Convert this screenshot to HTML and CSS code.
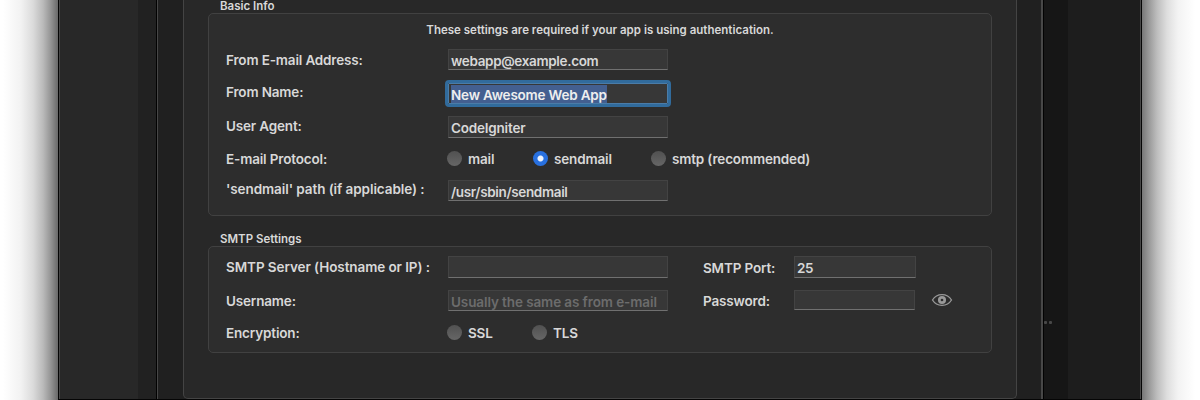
FILE: index.html
```html
<!DOCTYPE html>
<html lang="en">
<head>
<meta charset="utf-8">
<title>E-mail Settings</title>
<link rel="stylesheet" href="styles.css">
</head>
<body>
<div class="desktop">
  <div class="shadow shadow-left"></div>
  <div class="window">
    <div class="sidebar"></div>
    <div class="sidebar-shade"></div>
    <div class="sheet">
      <div class="panel">
        <h2 class="caption">Basic Info</h2>
        <section class="group basic">
          <p class="notice">These settings are required if your app is using authentication.</p>
          <div class="row r1"><span class="label">From E-mail Address:</span><div class="field"><span>webapp@example.com</span></div></div>
          <div class="row r2"><span class="label">From Name:</span><div class="field focused"><span class="selected">New Awesome Web App</span></div></div>
          <div class="row r3"><span class="label">User Agent:</span><div class="field tall"><span>CodeIgniter</span></div></div>
          <div class="row r4"><span class="label">E-mail Protocol:</span>
            <div class="radios"><span class="option first"><i class="dot"></i>mail</span><span class="option second"><i class="dot on"></i>sendmail</span><span class="option"><i class="dot"></i>smtp (recommended)</span></div>
          </div>
          <div class="row r5"><span class="label long">'sendmail' path (if applicable) :</span><div class="field"><span>/usr/sbin/sendmail</span></div></div>
        </section>
        <h2 class="caption smtp-caption">SMTP Settings</h2>
        <section class="group smtp">
          <div class="row s1"><span class="label long">SMTP Server (Hostname or IP) :</span><div class="field"></div><span class="label side">SMTP Port:</span><div class="field port"><span>25</span></div></div>
          <div class="row s2"><span class="label">Username:</span><div class="field"><span class="placeholder">Usually the same as from e-mail</span></div><span class="label side">Password:</span><div class="field password"></div>
            <svg class="eye" viewBox="0 0 22 14" width="22" height="14"><path d="M1.500 7C5.800 -.1 16.200 -.1 20.500 7C16.200 14.100 5.800 14.100 1.500 7Z"/><circle cx="11" cy="7" r="2.700"/></svg>
          </div>
          <div class="row s3"><span class="label">Encryption:</span>
            <div class="radios"><span class="option first"><i class="dot"></i>SSL</span><span class="option"><i class="dot"></i>TLS</span></div>
          </div>
        </section>
      </div>
    </div>
    <div class="right-shade"><span class="more"><i></i><i></i></span></div>
    <div class="right-pane"></div>
  </div>
  <div class="shadow shadow-right"></div>
</div>
</body>
</html>
```
FILE: styles.css
```css
* { box-sizing: border-box; }
body {
  margin: 0;
  background: #fff;
  color: #d8d8d8;
  font: 560 13.5px/16px Inter, "Liberation Sans", sans-serif;
  letter-spacing: -.16px;
}
.desktop { display: flex; width: 1200px; height: 400px; overflow: hidden; }
.shadow { width: 58px; flex: none; }
.shadow-left { background: linear-gradient(to left, #696969 0, #939393 7px, #bababa 15px, #dbdbdb 25px, #f2f2f2 37px, #fff 55px); }
.shadow-right { background: linear-gradient(to right, #777 0, #999 7px, #bdbdbd 15px, #dedede 25px, #f3f3f3 36px, #fff 53px); }
.window {
  display: flex;
  width: 1084px;
  flex: none;
  border: solid #050505;
  border-width: 0 1px 1px;
}
.sidebar { width: 79px; background: #282828; border-left: 1px solid #484848; }
.sidebar-shade { width: 19px; background: #212121; border-right: 1px solid #020202; }
.sheet {
  width: 886px;
  padding: 0 24px;
  background: #202020;
  border: solid #474747;
  border-width: 0 2px 0 1px;
  padding-left: 25px;
}
.panel {
  height: 399px;
  padding: 0 24px;
  background: #282828;
  border: 1px solid #444;
  border-top: 0;
  border-radius: 0 0 5px 5px;
}
.right-shade { width: 25px; background: #161616; border-left: 1px solid #020202; padding-top: 321px; }
.more { display: flex; gap: 2px; }
.more i { width: 3px; height: 3px; border-radius: 1px; background: #484848; }
.right-pane { flex: 1; background: #1d1d1d; border-right: 1px solid #484848; }
.caption {
  height: 13px;
  margin: 0;
  padding-left: 12px;
  font-size: 11.5px;
  font-weight: 560;
  line-height: 12px;
  letter-spacing: 0;
  white-space: nowrap;
}
.smtp-caption { height: 14px; margin-top: 17px; }
.group { background: #2d2d2d; border: 1px solid #414141; border-radius: 5px; padding: 0 17px; }
.basic { height: 203px; }
.smtp { height: 107px; margin-top: -1px; }
.notice { margin: 0; height: 35px; padding-top: 8px; font-size: 11.5px; letter-spacing: .01px; text-align: center; }
.row { display: flex; height: 21px; white-space: nowrap; }
.label { width: 222px; flex: none; padding-top: 3px; }
.label.long { letter-spacing: -.08px; }
.r2 { margin-top: 13px; }
.r2 .label { padding-top: 1px; }
.r3 { margin-top: 12px; height: 22px; }
.r3 .label { padding-top: 2px; }
.r4 { margin-top: 13px; height: 16px; }
.r4 .label, .s3 .label { padding-top: 0; }
.r5 { margin-top: 13px; height: 21px; }
.r5 .label { padding-top: 1px; }
.field {
  width: 220px;
  height: 21px;
  flex: none;
  padding: 4px 0 0 2px;
  background: #373737;
  border: 1px solid #434343;
  border-bottom-color: #707070;
  line-height: 16px;
  letter-spacing: -.34px;
}
.field span { display: block; width: max-content; margin-top: -1px; }
.field.tall { height: 22px; letter-spacing: -.2px; }
.focused { outline: 3px solid #316b9c; border-color: #4a7ca8; padding-top: 1px; color: #eee; border-radius: 1px; }
.field .selected { margin-top: 0; padding: 2px 0 0; height: 18px; background: #435f90; letter-spacing: -.2px; }
.radios { display: flex; }
.option { display: flex; margin-right: 40px; }
.option.first { width: 86px; margin-right: 0; }
.option.second { width: 78px; }
.dot { width: 15px; height: 15px; margin: 0 6px 0 -1px; border-radius: 50%; background: linear-gradient(#515151, #666); }
.dot.on { background: radial-gradient(circle, #edf3fc 0 2.500px, #2870df 3.500px); }
.s1 { margin-top: 9px; height: 22px; }
.s1 .label { padding-top: 3px; }
.s1 .field { height: 22px; }
.s2 { margin-top: 12px; height: 21px; }
.s3 { margin-top: 14px; height: 16px; }
.s3 .option.first { width: 85px; }
.label.side { width: 91px; margin-left: 35px; }
.s1 .side { padding-top: 4px; }
.port { width: 122px; }
.password { width: 121px; height: 20px; }
.field .placeholder { color: #6c6c6c; letter-spacing: -.1px; }
.eye { margin: 3px 0 0 16px; fill: none; stroke: #999; stroke-width: 1.300; }
.eye circle { stroke-width: 2.700; }
```
